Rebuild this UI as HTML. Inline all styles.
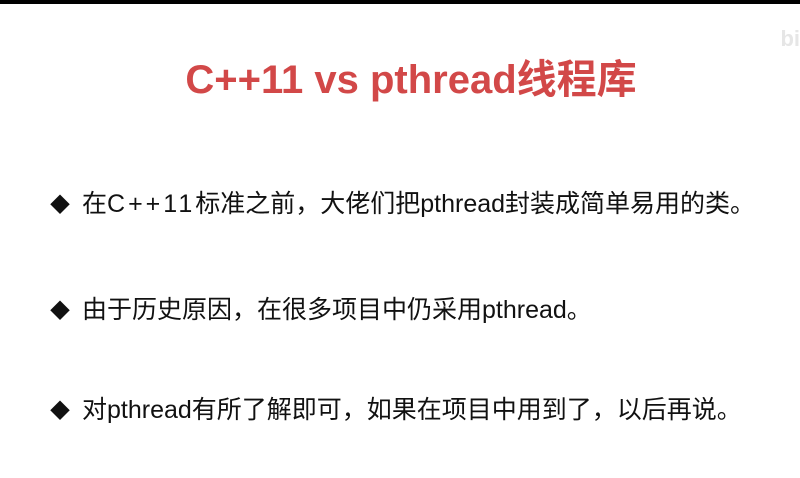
<!DOCTYPE html>
<html><head><meta charset="utf-8"><style>
html,body{margin:0;padding:0;}
body{width:800px;height:478px;background:#fff;position:relative;overflow:hidden;font-family:"Liberation Sans","Noto Sans CJK SC",sans-serif;}
.bar{position:absolute;left:0;top:0;width:800px;height:4px;background:#000;}
.title{position:absolute;left:11px;width:800px;top:55px;text-align:center;color:#d24848;font-weight:bold;font-size:40px;line-height:50px;}
.item{position:absolute;left:50px;font-size:25px;line-height:32px;color:#111;white-space:nowrap;}
.item span.b{display:inline-block;width:32px;font-size:20px;}
.sp{letter-spacing:3px;}
.logo{position:absolute;right:0;top:26px;color:#e6e6e6;font-size:22px;font-weight:bold;}
</style></head><body>
<div class="bar"></div>
<div class="logo">bi</div>
<div class="title">C++11 vs pthread线程库</div>
<div class="item" style="top:188px"><span class="b">◆</span>在<span class="sp">C++11</span>标准之前，大佬们把pthread封装成简单易用的类。</div>
<div class="item" style="top:294px"><span class="b">◆</span>由于历史原因，在很多项目中仍采用pthread。</div>
<div class="item" style="top:394px"><span class="b">◆</span>对pthread有所了解即可，如果在项目中用到了，以后再说。</div>
</body></html>
